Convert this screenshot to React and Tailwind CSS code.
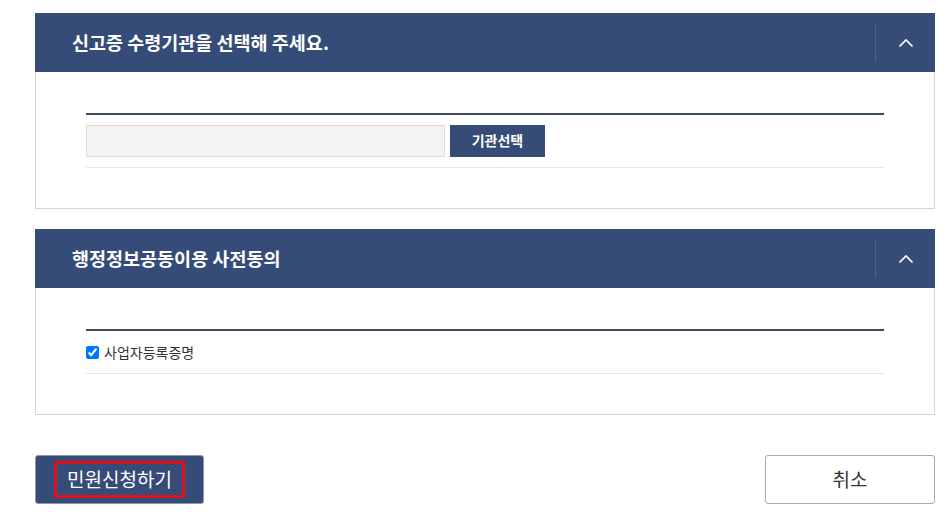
function Panel({ title, children }) {
  return (
    <section className="w-[900px] border border-[#d5d5d5] bg-white">
      <div className="-mx-px -mt-px flex h-[59px] items-center bg-[#344c77]">
        <h2 className="flex-1 pl-[37px] text-[18.5px] font-bold text-white">{title}</h2>
        <div className="flex h-[39px] w-[60px] items-center justify-center border-l border-[#4d628a]">
          <svg width="16" height="10" viewBox="0 0 16 10" fill="none">
            <path d="M1.5 8.5 L8 2 L14.5 8.5" stroke="white" strokeWidth="1.7" />
          </svg>
        </div>
      </div>
      <div className="px-[50px] pb-[40px] pt-[41px]">
        <div className="border-t-2 border-[#3d4b63]" />
        {children}
        <div className="border-t border-[#e8e8e8]" />
      </div>
    </section>
  );
}

export default function App() {
  return (
    <div className="h-[515px] w-[952px] bg-white pl-[35px] pt-[13px] font-['Noto_Sans_CJK_KR','Malgun_Gothic',sans-serif]">
      <Panel title="신고증 수령기관을 선택해 주세요.">
        <div className="flex h-[52px] items-center gap-[5px] pb-px">
          <input
            type="text"
            readOnly
            className="h-[32px] w-[359px] border border-[#dcdcdc] bg-[#f3f3f3] outline-none"
          />
          <button className="h-[32px] w-[95px] bg-[#344c77] text-[14px] font-bold text-white">
            기관선택
          </button>
        </div>
      </Panel>

      <div className="h-[20px]" />

      <Panel title="행정정보공동이용 사전동의">
        <label className="flex h-[42px] items-center gap-[5px]">
          <input type="checkbox" defaultChecked className="m-0 h-[13px] w-[13px] accent-[#0075ff]" />
          <span className="text-[14px] text-[#333]">사업자등록증명</span>
        </label>
      </Panel>

      <div className="mt-[40px] flex w-[900px] justify-between">
        <button className="flex h-[49px] w-[169px] items-center justify-center rounded-[3px] border border-[#8a97ad] bg-[#344c77]">
          <span className="flex h-[37px] w-[131px] items-center justify-center border-[3px] border-[#e0101c] text-[19px] text-white">
            민원신청하기
          </span>
        </button>
        <button className="h-[49px] w-[170px] rounded-[3px] border border-[#aaaaaa] bg-white text-[19px] text-[#333]">
          취소
        </button>
      </div>
    </div>
  );
}
